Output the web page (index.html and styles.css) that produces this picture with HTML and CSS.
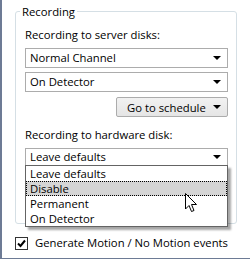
FILE: index.html
```html
<!DOCTYPE html>
<html lang="en">
<head>
    <meta charset="UTF-8">
    <title>Recording</title>
    <link rel="stylesheet" href="styles.css">
</head>
<body>
    <div class="frame">
        <fieldset class="group">
            <legend>Recording</legend>

            <div class="caption">Recording to server disks:</div>
            <div class="combo">
                <span>Normal Channel</span>
                <span class="arrow"></span>
            </div>
            <div class="combo">
                <span>On Detector</span>
                <span class="arrow"></span>
            </div>

            <div class="button-row">
                <div class="button">
                    <span>Go to schedule</span>
                    <span class="arrow"></span>
                </div>
            </div>

            <div class="caption">Recording to hardware disk:</div>
            <div class="combo-wrap">
                <div class="combo">
                    <span>Leave defaults</span>
                    <span class="arrow"></span>
                </div>
                <ul class="drop-list">
                    <li>Leave defaults</li>
                    <li class="hover">Disable</li>
                    <li>Permanent</li>
                    <li>On Detector</li>
                </ul>
                <svg class="cursor" width="13" height="20" viewBox="0 0 13 20">
                    <path d="M0.5 0.5 L0.5 16 L4 12.5 L6.5 18.5 L9 17.5 L6.5 11.5 L11.5 11.5 Z" fill="#fff" stroke="#000" stroke-width="1" stroke-linejoin="miter"/>
                </svg>
            </div>
        </fieldset>

        <label class="check-row">
            <span class="checkbox">
                <svg width="9" height="9" viewBox="0 0 9 9">
                    <path d="M1 4.5 L3.5 7 L8 1.5" fill="none" stroke="#000" stroke-width="2"/>
                </svg>
            </span>
            <span>Generate Motion / No Motion events</span>
        </label>
    </div>
</body>
</html>
```

FILE: styles.css
```css
/* Page frame */
body, html {
    margin: 0;
    padding: 0;
    width: 250px;
    height: 260px;
    overflow: hidden;
    background-color: #ffffff;
    font-family: 'Open Sans', 'Liberation Sans', sans-serif;
    font-size: 11.3px;
    color: #000000;
}

.frame {
    box-sizing: border-box;
    height: 259px;
    border-left: 2px solid #6d7b95;
    border-bottom: 1px solid #6d7b95;
    padding: 4px 0 0 13px;
}

/* Group box */
.group {
    box-sizing: border-box;
    width: 222px;
    height: 220px;
    margin: 0;
    padding: 8px 8px 0 9px;
    border: 1px solid #d5dfe5;
    border-radius: 3px;
    display: flex;
    flex-direction: column;
}

.group legend {
    padding: 0 2px;
    margin-left: -5px;
    line-height: 15px;
}

.caption {
    line-height: 16px;
    margin-bottom: 5px;
}

/* Combo boxes */
.combo {
    box-sizing: border-box;
    height: 20px;
    border: 1px solid #acacac;
    background-color: #ffffff;
    display: flex;
    align-items: center;
    justify-content: space-between;
    padding: 0 5px 0 4px;
    margin-bottom: 4px;
    line-height: 16px;
}

.arrow {
    width: 0;
    height: 0;
    border-left: 4px solid transparent;
    border-right: 4px solid transparent;
    border-top: 4px solid #000000;
    margin-right: 1px;
}

.button-row {
    display: flex;
    justify-content: flex-end;
    margin: 1px 0 10px;
}

.button {
    box-sizing: border-box;
    width: 112px;
    height: 20px;
    border: 1px solid #acacac;
    border-radius: 2px;
    background: linear-gradient(#f2f2f2, #e5e5e5);
    display: flex;
    align-items: center;
    justify-content: space-between;
    padding: 0 5px 0 10px;
}

/* Open drop-down list */
.combo-wrap {
    position: relative;
}

.combo-wrap .combo {
    height: 18px;
    margin-bottom: 0;
}

.drop-list {
    position: absolute;
    top: 17px;
    left: 0;
    right: 0;
    margin: 0;
    padding: 0;
    list-style: none;
    background-color: #ffffff;
    border: 1px solid #646464;
    box-shadow: 3px 3px 2px rgba(0, 0, 0, 0.35);
    z-index: 2;
}

.drop-list li {
    box-sizing: border-box;
    height: 15px;
    line-height: 13px;
    padding: 0 3px;
    border: 1px dotted transparent;
}

.drop-list li.hover {
    background-color: #d5d5d5;
    border-color: #000000;
}

.cursor {
    position: absolute;
    left: 160px;
    top: 45px;
    z-index: 3;
}

/* Checkbox */
.check-row {
    display: flex;
    align-items: center;
    gap: 7px;
    margin: 11px 0 0 0;
    line-height: 16px;
}

.checkbox {
    box-sizing: border-box;
    width: 13px;
    height: 13px;
    border: 1px solid #333333;
    background-color: #ffffff;
    display: flex;
    align-items: center;
    justify-content: center;
}
```
